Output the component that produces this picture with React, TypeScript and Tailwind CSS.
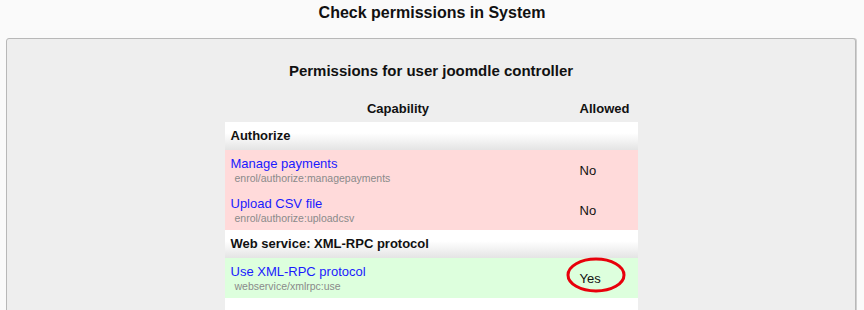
import React from 'react';

type Row = { name: string; cap: string; allowed: boolean; circled?: boolean };
type Group = { title: string; rows: Row[] };

const groups: Group[] = [
    {
        title: 'Authorize',
        rows: [
            { name: 'Manage payments', cap: 'enrol/authorize:managepayments', allowed: false },
            { name: 'Upload CSV file', cap: 'enrol/authorize:uploadcsv', allowed: false },
        ],
    },
    {
        title: 'Web service: XML-RPC protocol',
        rows: [{ name: 'Use XML-RPC protocol', cap: 'webservice/xmlrpc:use', allowed: true, circled: true }],
    },
];

const App = () => {
    return (
        <div className="w-[864px] h-[310px] overflow-hidden bg-[#fafafa] font-['Liberation_Sans',Arial,sans-serif] text-[#111]">
            <h2 className="h-[26px] leading-[26px] text-center text-[16px] font-bold">Check permissions in System</h2>

            <div className="ml-[6px] mt-[12px] w-[850px] h-[300px] rounded-t-[3px] border border-[#b8b8b8] bg-[#eeeeee] shadow-[1px_0_0_#d0d0d0]">
                <h3 className="mt-[22px] leading-[20px] text-center text-[15px] font-bold">
                    Permissions for user joomdle controller
                </h3>

                <table className="mx-auto mt-[16px] w-[413px] border-collapse text-[13px]">
                    <thead>
                        <tr className="h-[25px]">
                            <th className="w-[347px] pb-[2px] text-center font-bold">Capability</th>
                            <th className="pb-[2px] text-center font-bold">Allowed</th>
                        </tr>
                    </thead>
                    {groups.map((g) => (
                        <tbody key={g.title}>
                            <tr className="h-[28px] bg-gradient-to-b from-white from-40% to-[#e4e4e4]">
                                <td colSpan={2} className="px-[6px] font-bold">{g.title}</td>
                            </tr>
                            {g.rows.map((r) => (
                                <tr key={r.cap} className={`h-[40px] ${r.allowed ? 'bg-[#ddffdd]' : 'bg-[#ffdada]'}`}>
                                    <td className="px-[6px] align-top pt-[6px]">
                                        <a href="#" className="block leading-[16px] text-[#1a1aff]">{r.name}</a>
                                        <div className="pl-[4px] leading-[12px] text-[10.5px] text-[#8a8a8a]">{r.cap}</div>
                                    </td>
                                    <td className="relative pl-[8px] pt-[1px]">
                                        {r.allowed ? 'Yes' : 'No'}
                                        {r.circled && (
                                            <svg className="absolute left-[-5px] top-[0px] overflow-visible" width="60" height="36" viewBox="0 0 60 36">
                                                <ellipse cx="29" cy="17" rx="28" ry="16" fill="none" stroke="#e8000b" strokeWidth="3" />
                                            </svg>
                                        )}
                                    </td>
                                </tr>
                            ))}
                        </tbody>
                    ))}
                    <tbody>
                        <tr className="h-[40px] bg-white">
                            <td colSpan={2}></td>
                        </tr>
                    </tbody>
                </table>
            </div>
        </div>
    );
};

export default App;
